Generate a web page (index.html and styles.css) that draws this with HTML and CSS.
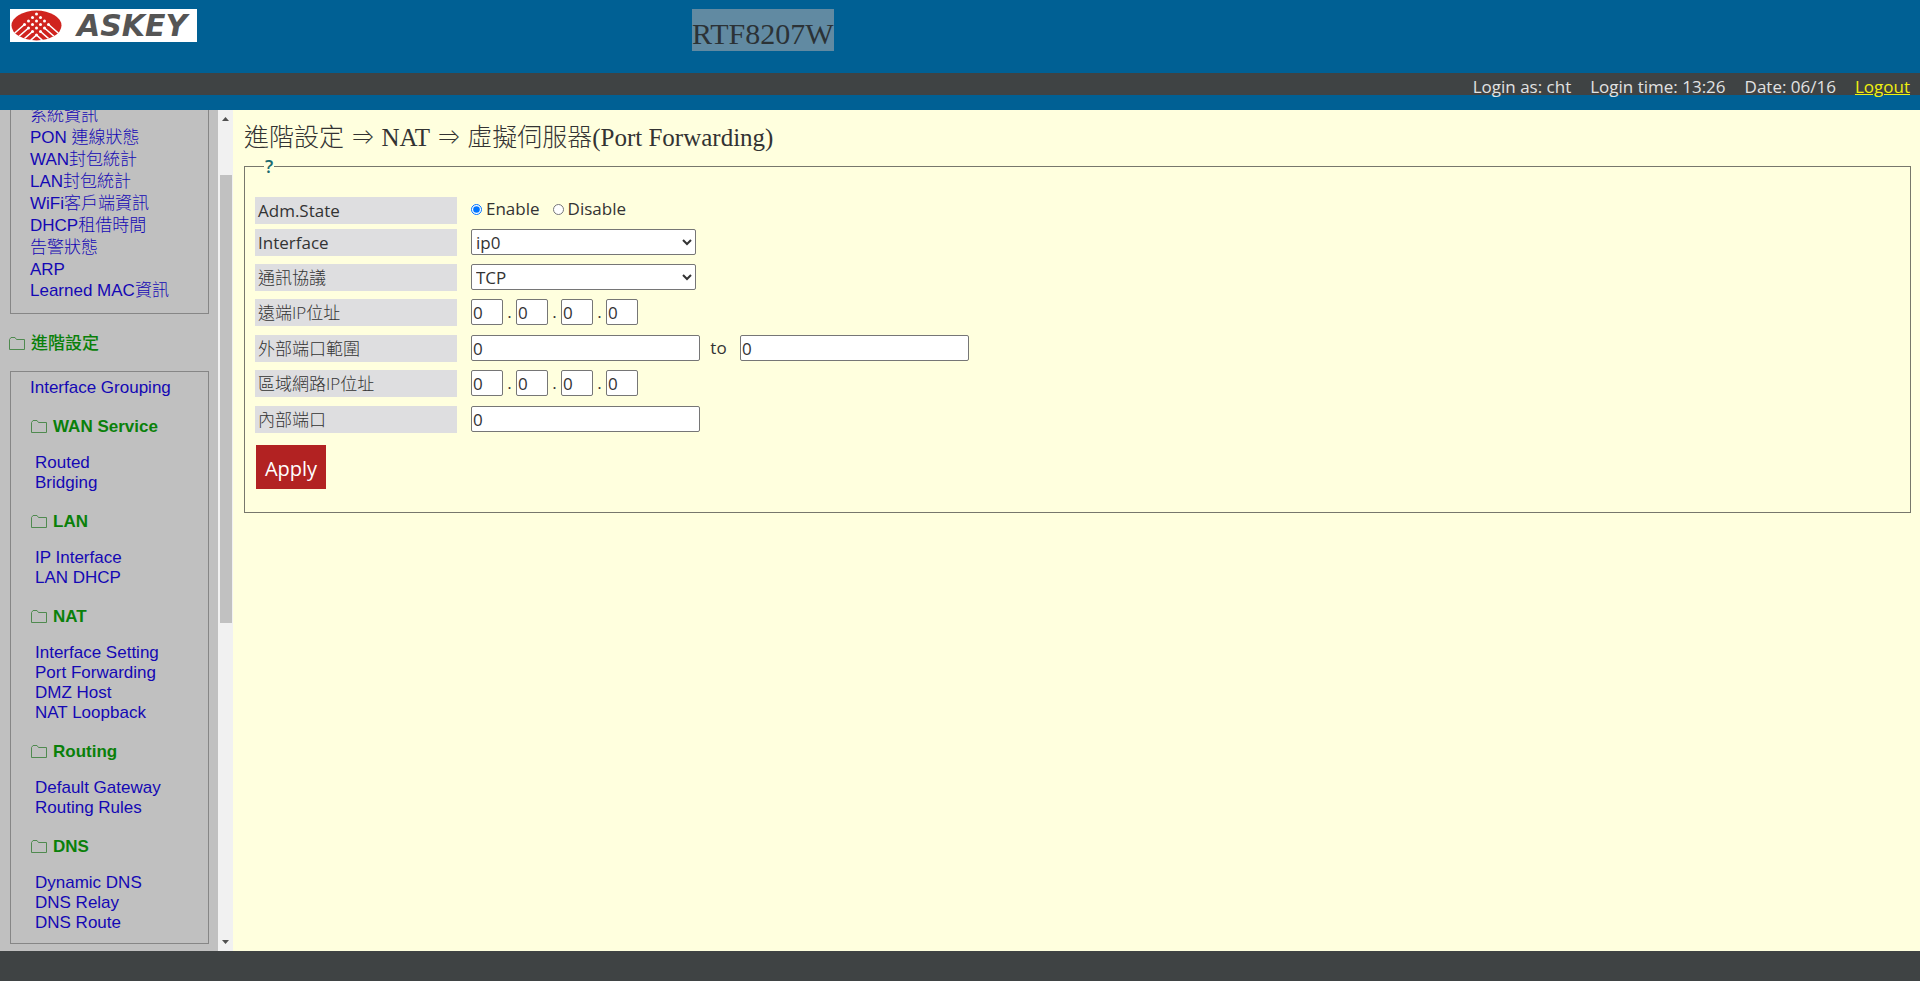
FILE: index.html
```html
<!DOCTYPE html>
<html lang="zh-Hant">
<head>
<meta charset="utf-8">
<title>RTF8207W</title>
<link rel="stylesheet" href="styles.css">
</head>
<body>
<svg width="0" height="0" class="defs" aria-hidden="true">
  <symbol id="folder" viewBox="0 0 18 16"><path d="M1.500 13.500V3.500L3 1.500H7L8.500 3.500H16.500V13.500Z" fill="none" stroke="#4f8a4f" stroke-width="1"/></symbol>
</svg>
<header class="banner">
  <div class="banner-top">
    <svg class="logo" viewBox="0 0 187 33" role="img" aria-label="ASKEY">
      <rect width="187" height="33" fill="#fff"/>
      <clipPath id="oval"><ellipse cx="26.500" cy="16.500" rx="25" ry="15"/></clipPath>
      <ellipse cx="26.500" cy="16.500" rx="25" ry="15" fill="#d0241f"/>
      <g clip-path="url(#oval)">
        <g fill="#fff">
          <circle cx="26.500" cy="5" r="1.500"/>
          <circle cx="22.500" cy="8.500" r="1.500"/><circle cx="30.500" cy="8.500" r="1.500"/>
          <circle cx="18.500" cy="12" r="1.500"/><circle cx="26.500" cy="12" r="1.500"/><circle cx="34.500" cy="12" r="1.500"/>
          <circle cx="14.500" cy="15.500" r="1.500"/><circle cx="22.500" cy="15.500" r="1.500"/><circle cx="30.500" cy="15.500" r="1.500"/><circle cx="38.500" cy="15.500" r="1.500"/>
          <circle cx="18.500" cy="19" r="1.500"/><circle cx="26.500" cy="19" r="1.500"/><circle cx="34.500" cy="19" r="1.500"/>
          <circle cx="22.500" cy="22.500" r="1.500"/><circle cx="30.500" cy="22.500" r="1.500"/>
          <circle cx="26.500" cy="26" r="1.500"/>
        </g>
        <path d="M14.500 15.500L2.500 26M18.500 19L6.500 29.500M22.500 22.500L10.500 33M26.500 26L16.500 35M38.500 15.500L50.500 26M34.500 19L46.500 29.500M30.500 22.500L42.500 33M26.500 26L36.500 35" stroke="#fff" stroke-width="1.600" fill="none"/>
      </g>
      <text x="67" y="27" class="logo-text">ASKEY</text>
    </svg>
    <h1 class="model"><span class="model-name">RTF8207W</span></h1>
  </div>
  <div class="status">
    <span>Login as: cht</span><span>Login time: 13:26</span><span>Date: 06/16</span><a href="#">Logout</a>
  </div>
</header>
<div class="body">
  <nav class="sidebar">
    <div class="menu">
      <ul class="box box-status">
        <li><a href="#">系統資訊</a></li>
        <li><a href="#">PON 連線狀態</a></li>
        <li><a href="#">WAN封包統計</a></li>
        <li><a href="#">LAN封包統計</a></li>
        <li><a href="#">WiFi客戶端資訊</a></li>
        <li><a href="#">DHCP租借時間</a></li>
        <li><a href="#">告警狀態</a></li>
        <li class="latin"><a href="#">ARP</a></li>
        <li><a href="#">Learned MAC資訊</a></li>
      </ul>
      <h2 class="heading"><svg class="folder"><use href="#folder"/></svg>進階設定</h2>
      <div class="box box-advanced">
        <a href="#">Interface Grouping</a>
        <h3 class="heading sub"><svg class="folder"><use href="#folder"/></svg>WAN Service</h3>
        <ul class="group"><li><a href="#">Routed</a></li><li><a href="#">Bridging</a></li></ul>
        <h3 class="heading sub"><svg class="folder"><use href="#folder"/></svg>LAN</h3>
        <ul class="group"><li><a href="#">IP Interface</a></li><li><a href="#">LAN DHCP</a></li></ul>
        <h3 class="heading sub"><svg class="folder"><use href="#folder"/></svg>NAT</h3>
        <ul class="group"><li><a href="#">Interface Setting</a></li><li><a href="#">Port Forwarding</a></li><li><a href="#">DMZ Host</a></li><li><a href="#">NAT Loopback</a></li></ul>
        <h3 class="heading sub"><svg class="folder"><use href="#folder"/></svg>Routing</h3>
        <ul class="group"><li><a href="#">Default Gateway</a></li><li><a href="#">Routing Rules</a></li></ul>
        <h3 class="heading sub"><svg class="folder"><use href="#folder"/></svg>DNS</h3>
        <ul class="group"><li><a href="#">Dynamic DNS</a></li><li><a href="#">DNS Relay</a></li><li><a href="#">DNS Route</a></li></ul>
      </div>
    </div>
    <div class="scroll" aria-hidden="true">
      <svg class="arrow" viewBox="0 0 15 17"><path d="M4 11L7.500 7L11 11Z" fill="#505050"/></svg>
      <div class="track"><div class="thumb"></div></div>
      <svg class="arrow" viewBox="0 0 15 17"><path d="M4 6L7.500 10L11 6Z" fill="#505050"/></svg>
    </div>
  </nav>
  <main class="content">
    <h2 class="title">進階設定 <span class="implies">⇒</span> NAT <span class="implies">⇒</span> 虛擬伺服器(Port Forwarding)</h2>
    <form>
      <fieldset class="panel">
        <legend class="legend">?</legend>
        <div class="row row-state">
          <span class="label label-latin" id="state">Adm.State</span>
          <div class="control" role="radiogroup" aria-labelledby="state">
            <label class="option"><input type="radio" name="state" checked>Enable</label>
            <label class="option"><input type="radio" name="state">Disable</label>
          </div>
        </div>
        <div class="row">
          <label class="label label-latin" for="iface">Interface</label>
          <div class="control"><select id="iface"><option>ip0</option></select></div>
        </div>
        <div class="row">
          <label class="label" for="proto">通訊協議</label>
          <div class="control"><select id="proto"><option>TCP</option></select></div>
        </div>
        <div class="row row-ip">
          <label class="label" for="rip">遠端IP位址</label>
          <div class="control"><input id="rip" class="octet" type="text" value="0"><span class="dot">.</span><input class="octet" type="text" value="0" aria-label="遠端IP 2"><span class="dot">.</span><input class="octet" type="text" value="0" aria-label="遠端IP 3"><span class="dot">.</span><input class="octet" type="text" value="0" aria-label="遠端IP 4"></div>
        </div>
        <div class="row">
          <label class="label" for="ext">外部端口範圍</label>
          <div class="control"><input id="ext" class="port" type="text" value="0"><label class="to" for="ext2">to</label><input id="ext2" class="port" type="text" value="0"></div>
        </div>
        <div class="row row-ip">
          <label class="label" for="lip">區域網路IP位址</label>
          <div class="control"><input id="lip" class="octet" type="text" value="0"><span class="dot">.</span><input class="octet" type="text" value="0" aria-label="區域網路IP 2"><span class="dot">.</span><input class="octet" type="text" value="0" aria-label="區域網路IP 3"><span class="dot">.</span><input class="octet" type="text" value="0" aria-label="區域網路IP 4"></div>
        </div>
        <div class="row">
          <label class="label" for="int">內部端口</label>
          <div class="control"><input id="int" class="port" type="text" value="0"></div>
        </div>
        <button class="apply" type="button">Apply</button>
      </fieldset>
    </form>
  </main>
</div>
<footer class="footer"></footer>
</body>
</html>
```

FILE: styles.css
```css
* { box-sizing: border-box; }

body {
  margin: 0;
  height: 100vh;
  display: flex;
  flex-direction: column;
  overflow: hidden;
  background: #ffffde;
  color: #333;
  font: 300 17px/20px "Liberation Sans", "Noto Sans CJK TC", sans-serif;
}

h1, h2, h3, ul { margin: 0; padding: 0; font: inherit; }
ul { list-style: none; }

.defs { position: absolute; }

/* Banner */
.banner {
  background: linear-gradient(#006094 73px, #3f4344 73px, #3f4344 95px, #006094 95px);
  height: 110px;
}

.banner-top {
  height: 73px;
  padding: 9px 10px 0;
  display: grid;
  grid-template-columns: calc(36% - 2px) 1fr;
  align-items: start;
}

.logo { width: 187px; height: 33px; }

.logo-text {
  font: italic 700 30px "DejaVu Sans", sans-serif;
  fill: #555;
}

.model { font: 400 30px/34px "Liberation Serif", serif; }
.model-name { display: inline-block; padding-top: 8px; background: #618aa2; color: #2b3236; }

.status {
  display: flex;
  justify-content: flex-end;
  gap: 19px;
  padding: 2px 10px 0;
  color: #e2e2e2;
  font: 400 17px/24px "Open Sans", sans-serif;
}

.status a { color: #f0f010; }

/* Layout */
.body { flex: 1; min-height: 0; display: flex; }
.footer { height: 30px; background: #3f4344; }

/* Sidebar */
.sidebar { width: 233px; display: flex; background: #c0c0c0; overflow: hidden; }
.sidebar a { color: #1408b4; text-decoration: none; }

.menu { flex: 1; padding: 0 9px 0 10px; }
.box { border: 1px solid #868686; }

.box-status {
  margin-top: -5px;
  padding: 0 0 11px 19px;
  border-top: 0;
  line-height: 22px;
}

.latin { line-height: 21px; }

.heading {
  display: flex;
  align-items: center;
  gap: 5px;
  color: #0a800a;
  font-weight: 500;
}

.menu > .heading { margin: 20px 0 17px -2px; }
.folder { width: 18px; height: 16px; }

.box-advanced { padding: 6px 0 10px 19px; }
.sub { margin: 19px 0 16px; font-weight: 700; }
.group { padding-left: 5px; }

.scroll { width: 15px; display: flex; flex-direction: column; background: #f1f1f1; }
.arrow { width: 15px; height: 17px; }
.track { flex: 1; padding: 48px 1px 0 2px; }
.thumb { height: 59%; background: #c1c1c1; }

/* Content */
.content {
  flex: 1;
  padding: 12px 9px 0 11px;
  font-family: "Open Sans", "Noto Sans CJK TC", sans-serif;
}

.title { font: 300 25px/32px "Liberation Serif", "Noto Sans CJK TC", serif; }
.implies { font-family: "DejaVu Sans", sans-serif; }

.panel {
  margin: 2px 0 0;
  padding: 21px 10px 23px;
  border: 1px solid #77776c;
}

.legend {
  margin-left: 9px;
  padding: 0 1px;
  color: #1b6a70;
  font-size: 18px;
  font-weight: 600;
  line-height: 20px;
}

.row {
  display: grid;
  grid-template-columns: 202px 1fr;
  column-gap: 14px;
  align-items: start;
  margin-bottom: 8px;
}

.row-state { margin-bottom: 5px; }
.row-ip { margin-bottom: 9px; }

.label {
  padding-left: 3px;
  background: #dedee0;
  line-height: 27px;
}

.control { display: flex; align-items: center; line-height: 26px; font-weight: 400; }

.label-latin { font-weight: 400; }

.option { display: flex; align-items: center; gap: 4px; margin-right: 13px; line-height: 24px; }
.option input { width: 11px; height: 11px; margin: 0; }

.panel select, .octet, .port {
  height: 26px;
  border: 1px solid #767676;
  border-radius: 2px;
  background-color: #fff;
  color: #333;
  font: 400 17px "Open Sans", sans-serif;
}

.panel select { width: 225px; padding: 0; }
.octet { width: 32px; padding: 0 1px; }
.port { width: 229px; padding: 0 1px; }
.dot { width: 13px; text-align: center; }
.to { width: 40px; padding-right: 3px; text-align: center; }

.apply {
  display: block;
  width: 70px;
  height: 44px;
  margin: 12px 0 0 1px;
  padding: 2px 0 0;
  border: 0;
  background: #b22222;
  color: #fff;
  font: 400 20px "Open Sans", sans-serif;
}
```
